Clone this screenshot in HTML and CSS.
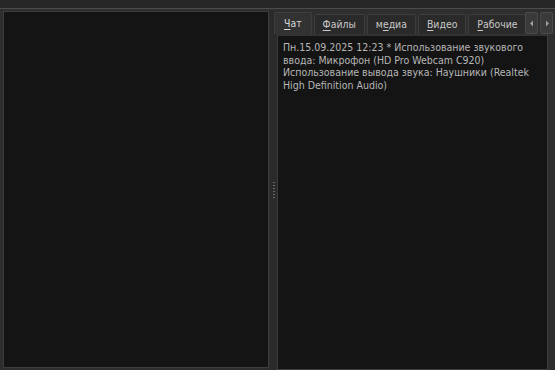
FILE: index.html
```html
<!DOCTYPE html>
<html>
<head>
<meta charset="utf-8">
<link rel="stylesheet" href="styles.css">
</head>
<body>
<div class="topbar"></div>
<div class="main">
  <div class="left-panel"></div>
  <div class="splitter"><div class="grip"></div></div>
  <div class="tabwidget">
    <div class="tabbar">
      <div class="tabs">
        <div class="tab active"><u>Ч</u>ат</div>
        <div class="tab"><u>Ф</u>айлы</div>
        <div class="tab">м<u>е</u>диа</div>
        <div class="tab"><u>В</u>идео</div>
        <div class="tab"><u>Р</u>абочие</div>
      </div>
      <div class="arrows">
        <div class="arrow"><svg width="6" height="7" viewBox="0 0 6 7"><path d="M4 0.5 L1 3.5 L4 6.5 Z" fill="#a0a0a0"/></svg></div>
        <div class="arrow"><svg width="6" height="7" viewBox="0 0 6 7"><path d="M2 0.5 L5 3.5 L2 6.5 Z" fill="#a0a0a0"/></svg></div>
      </div>
    </div>
    <div class="pane">
      <div class="log">Пн.15.09.2025 12:23 * Использование звукового ввода: Микрофон (HD Pro Webcam C920) Использование вывода звука: Наушники (Realtek High Definition Audio)</div>
    </div>
  </div>
</div>
</body>
</html>
```
FILE: styles.css
```css
html, body {
  margin: 0;
  padding: 0;
  width: 555px;
  height: 370px;
  overflow: hidden;
  background: #2e2e2e;
  font-family: "DejaVu Sans Condensed", "DejaVu Sans", sans-serif;
}
.topbar {
  height: 8px;
  background: #272727;
  border-bottom: 1px solid #4c4c4c;
}
.main {
  display: flex;
  height: 361px;
  padding: 2px 0 0 3px;
  box-sizing: border-box;
}
.left-panel {
  width: 266px;
  height: 357px;
  background: #141414;
  border: 1px solid #3c3c3c;
  box-sizing: border-box;
}
.splitter {
  width: 7px;
  display: flex;
  align-items: center;
  justify-content: center;
  background: #2a2a2a;
  margin-left: 1px;
}
.grip {
  width: 2px;
  height: 18px;
  background: repeating-linear-gradient(#6a6a6a 0 1px, transparent 1px 3px);
}
.tabwidget {
  flex: 1;
  display: flex;
  flex-direction: column;
}
.tabbar {
  display: flex;
  align-items: flex-end;
  height: 23px;
  margin-left: -3px;
}
.tabs {
  display: flex;
  align-items: flex-end;
  overflow: hidden;
  width: 251px;
}
.tab {
  flex: none;
  height: 19px;
  padding: 0 8px;
  margin-right: 2px;
  background: #2a2a2a;
  border: 1px solid #3e3e3e;
  border-bottom: none;
  border-radius: 2px 2px 0 0;
  color: #c8c8c8;
  font-size: 10.4px;
  line-height: 19px;
  white-space: nowrap;
}
.tab u { text-decoration-thickness: 1px; text-underline-offset: 2px; }
.tab.active {
  height: 21px;
  line-height: 21px;
  padding: 0 9px;
  background: #323232;
  color: #d8d8d8;
}
.arrows {
  display: flex;
  gap: 2px;
  margin-bottom: 0;
}
.arrow {
  width: 13px;
  height: 22px;
  background: #3a3a3a;
  border: 1px solid #4a4a4a;
  border-radius: 2px;
  box-sizing: border-box;
  display: flex;
  align-items: center;
  justify-content: center;
}
.pane {
  flex: 1;
  background: #141414;
  border: 1px solid #3c3c3c;
  border-top: 2px solid #323232;
  margin-right: 7px;
  padding: 5px 6px 3px 5px;
}
.log {
  color: #b6b6b6;
  font-size: 10.5px;
  line-height: 12.7px;
}
```
